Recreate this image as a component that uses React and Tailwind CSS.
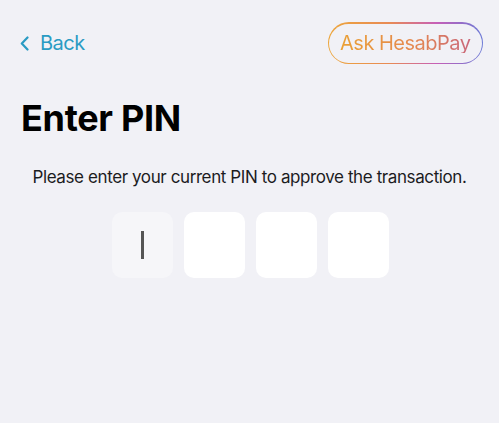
import React from 'react'

export default function App() {
    return (
        <div className="w-[499px] h-[423px] bg-[#f1f1f6] font-['Inter',sans-serif] text-black overflow-hidden">
            {/* top bar */}
            <div className="flex items-center justify-between pl-5 pr-4 pt-[22px]">
                <button className="flex items-center gap-[11px] text-[#2a9bc3] text-[20px] tracking-[-0.5px] leading-none">
                    <svg width="9" height="15" viewBox="0 0 9 15" fill="none">
                        <path d="M7.5 1.5L1.8 7.5l5.7 6" stroke="currentColor" strokeWidth="2.2" strokeLinecap="round" strokeLinejoin="round" />
                    </svg>
                    <span>Back</span>
                </button>
                <div className="rounded-full p-[1.5px] bg-[linear-gradient(90deg,#eda63a,#e88a55_40%,#c65fb7_70%,#6a79d6)]">
                    <div className="rounded-full bg-[#f1f1f6] h-[39px] px-[11px] flex items-center">
                        <span className="text-[20px] tracking-[-0.5px] leading-none bg-[linear-gradient(90deg,#eaa034,#e5894f_55%,#c9667a)] bg-clip-text text-transparent">
                            Ask HesabPay
                        </span>
                    </div>
                </div>
            </div>

            {/* title */}
            <h1 className="mt-[36px] ml-[21px] text-[36px] font-bold leading-none tracking-[-0.3px]">Enter PIN</h1>

            <p className="mt-[33px] text-center text-[17px] tracking-[-0.4px] leading-none text-[#1c1c1e]">
                Please enter your current PIN to approve the transaction.
            </p>

            {/* pin boxes */}
            <div className="mt-[26px] flex justify-center gap-[11px] pl-[1px]">
                <div className="w-[61px] h-[66px] rounded-[10px] bg-[#f6f6f9] flex items-center justify-center">
                    <div className="w-[3px] h-[28px] bg-[#555]" />
                </div>
                <div className="w-[61px] h-[66px] rounded-[10px] bg-white" />
                <div className="w-[61px] h-[66px] rounded-[10px] bg-white" />
                <div className="w-[61px] h-[66px] rounded-[10px] bg-white" />
            </div>
        </div>
    )
}
